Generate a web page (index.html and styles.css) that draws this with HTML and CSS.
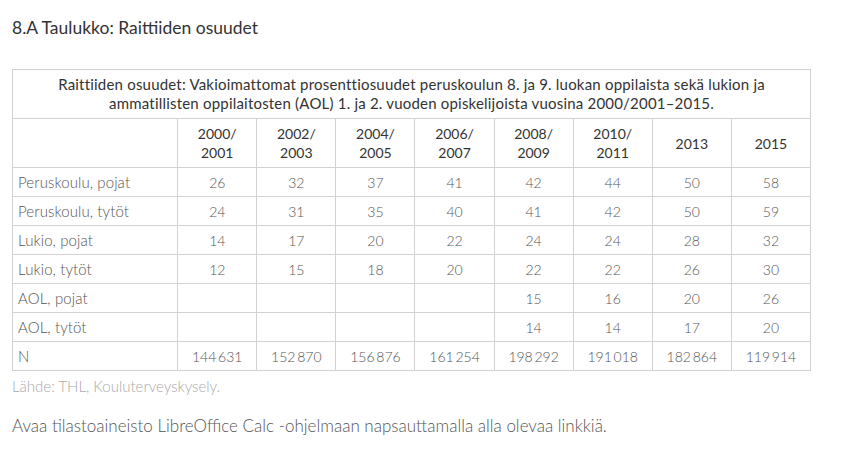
FILE: index.html
```html
<!DOCTYPE html>
<html lang="fi">
<head>
<meta charset="utf-8">
<link rel="stylesheet" href="styles.css">
</head>
<body>
<div class="page">
  <h2 class="title">8.A Taulukko: Raittiiden osuudet</h2>
  <table class="data">
    <colgroup>
      <col class="c-label">
      <col span="8" class="c-num">
    </colgroup>
    <thead>
      <tr><th class="caption" colspan="9">Raittiiden osuudet: Vakioimattomat prosenttiosuudet peruskoulun 8. ja 9. luokan oppilaista sekä lukion ja ammatillisten oppilaitosten (AOL) 1. ja 2. vuoden opiskelijoista vuosina 2000/2001–2015.</th></tr>
      <tr class="head">
        <th></th>
        <th>2000/<br>2001</th>
        <th>2002/<br>2003</th>
        <th>2004/<br>2005</th>
        <th>2006/<br>2007</th>
        <th>2008/<br>2009</th>
        <th>2010/<br>2011</th>
        <th>2013</th>
        <th>2015</th>
      </tr>
    </thead>
    <tbody>
      <tr><td>Peruskoulu, pojat</td><td>26</td><td>32</td><td>37</td><td>41</td><td>42</td><td>44</td><td>50</td><td>58</td></tr>
      <tr><td>Peruskoulu, tytöt</td><td>24</td><td>31</td><td>35</td><td>40</td><td>41</td><td>42</td><td>50</td><td>59</td></tr>
      <tr><td>Lukio, pojat</td><td>14</td><td>17</td><td>20</td><td>22</td><td>24</td><td>24</td><td>28</td><td>32</td></tr>
      <tr><td>Lukio, tytöt</td><td>12</td><td>15</td><td>18</td><td>20</td><td>22</td><td>22</td><td>26</td><td>30</td></tr>
      <tr><td>AOL, pojat</td><td></td><td></td><td></td><td></td><td>15</td><td>16</td><td>20</td><td>26</td></tr>
      <tr><td>AOL, tytöt</td><td></td><td></td><td></td><td></td><td>14</td><td>14</td><td>17</td><td>20</td></tr>
      <tr><td>N</td><td>144&#8201;631</td><td>152&#8201;870</td><td>156&#8201;876</td><td>161&#8201;254</td><td>198&#8201;292</td><td>191&#8201;018</td><td>182&#8201;864</td><td>119&#8201;914</td></tr>
    </tbody>
  </table>
  <p class="source">Lähde: THL, Kouluterveyskysely.</p>
  <p class="link-note">Avaa tilastoaineisto LibreOffice Calc -ohjelmaan napsauttamalla alla olevaa linkkiä.</p>
</div>
</body>
</html>
```

FILE: styles.css
```css
html, body {
  margin: 0;
  padding: 0;
  background: #ffffff;
}
body {
  font-family: "Lato", "Liberation Sans", sans-serif;
  color: #333333;
}
.page {
  padding: 17px 12px 0 12px;
}
.title {
  margin: 0;
  font-size: 17.5px;
  font-weight: 400;
  line-height: 22px;
  color: #333333;
}
.data {
  margin-top: 30px;
  border-collapse: collapse;
  table-layout: fixed;
  width: 799px;
}
.c-label { width: 165px; }
.c-num { width: 79px; }
.data th,
.data td {
  border: 1px solid #d2d2d2;
  font-size: 14px;
  line-height: 19px;
}
.data th.caption {
  font-size: 15px;
  letter-spacing: 0.2px;
  font-weight: 400;
  color: #333333;
  padding: 5px 30px;
  text-align: center;
}
.head th {
  font-weight: 400;
  color: #333333;
  text-align: center;
  padding: 5px 4px;
  height: 38px;
}
.data td {
  font-weight: 300;
  color: #555555;
  text-align: center;
  padding: 4px 4px;
  height: 20px;
}
.data td:first-child {
  text-align: left;
  padding-left: 5px;
  font-size: 15px;
  letter-spacing: 0.1px;
}
.source {
  margin: 6px 0 0 0;
  font-size: 15px;
  line-height: 18px;
  font-weight: 300;
  color: #aaaaaa;
}
.link-note {
  margin: 20px 0 0 0;
  font-size: 17px;
  line-height: 22px;
  font-weight: 300;
  color: #555555;
}
```
